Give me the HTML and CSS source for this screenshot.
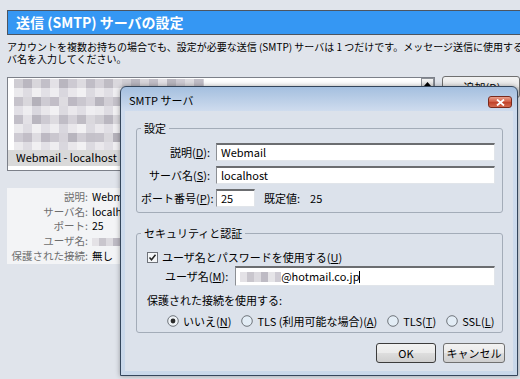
FILE: index.html
```html
<!DOCTYPE html>
<html lang="ja">
<head>
  <meta charset="UTF-8" />
  <meta name="viewport" content="width=device-width, initial-scale=1.0">
  <title>送信 (SMTP) サーバの設定</title>
  <link rel="stylesheet" href="styles.css">
</head>
<body>
<div class="page">
  <div class="header">送信 (SMTP) サーバの設定</div>
  <p class="desc">アカウントを複数お持ちの場合でも、設定が必要な送信 (SMTP) サーバは 1 つだけです。メッセージ送信に使用するサー<br>バ名を入力してください。</p>

  <div class="list-area">
    <div class="list-box">
      <div class="list-items">
        <div class="mosaic-block">
          <div class="mosaic m-a wide"></div>
          <div class="mosaic m-b"></div>
          <div class="mosaic m-c"></div>
          <div class="mosaic m-b shift"></div>
          <div class="mosaic m-a shift"></div>
          <div class="mosaic m-b"></div>
          <div class="mosaic m-c shift"></div>
          <div class="mosaic m-b"></div>
        </div>
        <div class="list-item selected">Webmail - localhost</div>
      </div>
      <div class="scrollbar">
        <div class="scroll-btn">
          <svg width="11" height="11" viewBox="0 0 11 11"><path d="M2 7 L5.5 3 L9 7 Z" fill="#000"/></svg>
        </div>
      </div>
    </div>
    <button class="btn add-btn">追加(<u>D</u>)</button>
  </div>

  <div class="details">
    <span class="dl">説明:</span><span class="dv">Webmail</span>
    <span class="dl">サーバ名:</span><span class="dv">localhost</span>
    <span class="dl">ポート:</span><span class="dv">25</span>
    <span class="dl">ユーザ名:</span><span class="dv"><span class="mosaic-inline small"></span></span>
    <span class="dl">保護された接続:</span><span class="dv">無し</span>
  </div>
</div>

<div class="dialog">
  <div class="dialog-title">
    <span>SMTP サーバ</span>
    <span class="close-btn">
      <svg width="9" height="7" viewBox="0 0 9 7"><path d="M1 0.5 L8 6.5 M8 0.5 L1 6.5" stroke="#fff" stroke-width="1.8"/></svg>
    </span>
  </div>
  <div class="dialog-body">
    <fieldset class="group">
      <legend>設定</legend>
      <div class="form-grid">
        <label>説明(<u>D</u>):</label>
        <div class="field">Webmail</div>
        <label>サーバ名(<u>S</u>):</label>
        <div class="field">localhost</div>
        <label>ポート番号(<u>P</u>):</label>
        <div class="port-row">
          <div class="field port">25</div>
          <span class="default-label">既定値:</span>
          <span>25</span>
        </div>
      </div>
    </fieldset>

    <fieldset class="group security">
      <legend>セキュリティと認証</legend>
      <div class="group-inner">
        <div class="check-row">
          <svg width="11" height="11" viewBox="0 0 11 11">
            <rect x="0.5" y="0.5" width="10" height="10" fill="#f4f6f8" stroke="#6f737a"/>
            <path d="M2.5 5.5 L4.5 7.8 L8.5 2.8" stroke="#222" stroke-width="1.5" fill="none"/>
          </svg>
          <span>ユーザ名とパスワードを使用する(<u>U</u>)</span>
        </div>
        <div class="user-row">
          <label>ユーザ名(<u>M</u>):</label>
          <div class="field user"><span class="mosaic-inline"></span>@hotmail.co.jp<span class="caret"></span></div>
        </div>
        <div class="protect-label">保護された接続を使用する:</div>
        <div class="radio-row">
          <span class="radio">
            <svg width="12" height="12" viewBox="0 0 12 12"><circle cx="6" cy="6" r="5.3" fill="#eef2f6" stroke="#6f747b"/><circle cx="6" cy="6" r="2.4" fill="#2a2a2a"/></svg>
            <span>いいえ(<u>N</u>)</span>
          </span>
          <span class="radio">
            <svg width="12" height="12" viewBox="0 0 12 12"><circle cx="6" cy="6" r="5.3" fill="#e3edf6" stroke="#6f747b"/></svg>
            <span>TLS (利用可能な場合)(<u>A</u>)</span>
          </span>
          <span class="radio">
            <svg width="12" height="12" viewBox="0 0 12 12"><circle cx="6" cy="6" r="5.3" fill="#e3edf6" stroke="#6f747b"/></svg>
            <span>TLS(<u>T</u>)</span>
          </span>
          <span class="radio">
            <svg width="12" height="12" viewBox="0 0 12 12"><circle cx="6" cy="6" r="5.3" fill="#e3edf6" stroke="#6f747b"/></svg>
            <span>SSL(<u>L</u>)</span>
          </span>
        </div>
      </div>
    </fieldset>

    <div class="button-row">
      <button class="btn ok-btn">OK</button>
      <button class="btn cancel-btn">キャンセル</button>
    </div>
  </div>
</div>
</body>
</html>
```

FILE: styles.css
```css
body {
  margin: 0;
  background: #e0e4eb;
  font-family: "Noto Sans CJK JP", "Noto Sans", sans-serif;
  font-size: 11px;
  color: #000;
  overflow: hidden;
  width: 520px;
  height: 379px;
  position: relative;
}
.page {
  padding: 10px 0 0 7px;
}
.header {
  width: 560px;
  height: 25px;
  box-sizing: border-box;
  border: 1px solid #4d5560;
  background: #3597f3;
  color: #fff;
  font-weight: bold;
  font-size: 14px;
  line-height: 22px;
  padding-left: 8px;
}
.desc {
  margin: 6px 0 0;
  font-size: 10px;
  line-height: 12px;
  white-space: nowrap;
}
.list-area {
  display: flex;
  align-items: flex-start;
  gap: 7px;
  margin-top: 12px;
}
.list-box {
  width: 439px;
  height: 94px;
  box-sizing: border-box;
  border: 1px solid #7c8089;
  background: #fff;
  display: flex;
}
.list-items {
  flex: 1;
}
.mosaic-block {
  padding: 1px 0 0 6px;
  height: 72px;
  box-sizing: border-box;
}
.mosaic {
  width: 106px;
  height: 9px;
  background-size: 108px 100%;
  background-repeat: repeat-x;
}
.mosaic.wide { width: 190px; }
.mosaic.shift { background-position: -27px 0; }
.m-a {
  background-image: linear-gradient(90deg, #cfcdd3 0 9px, #bab7c0 9px 18px, #d8d6db 18px 27px, #c2bfc8 27px 36px, #e3e1e6 36px 45px, #b9b6bf 45px 54px, #cdcad2 54px 63px, #dddbe0 63px 72px, #c0bdc6 72px 81px, #d4d1d8 81px 90px, #bfbcc4 90px 99px, #dad8dd 99px 108px);
}
.m-b {
  background-image: linear-gradient(90deg, #ebeaed 0 9px, #dedce2 9px 18px, #f1f0f2 18px 27px, #e2e0e6 27px 36px, #eeedf0 36px 45px, #d9d7de 45px 54px, #e9e7eb 54px 63px, #f2f1f3 63px 72px, #dcdae0 72px 81px, #eae8ec 81px 90px, #e0dee4 90px 99px, #efeef1 99px 108px);
}
.m-c {
  background-image: linear-gradient(90deg, #c6c3cb 0 9px, #d9d7dc 9px 18px, #b4b1ba 18px 27px, #cecbd3 27px 36px, #c2bec7 36px 45px, #dedce1 45px 54px, #bdb9c3 54px 63px, #cac7cf 63px 72px, #d6d3da 72px 81px, #b8b5be 81px 90px, #d1ced5 90px 99px, #c4c1c9 99px 108px);
}
.list-item {
  height: 16px;
  line-height: 15px;
  padding-left: 8px;
  font-size: 11px;
}
.list-item.selected {
  background: #d9d9d9;
}
.scrollbar {
  width: 13px;
  background: #fff;
}
.scroll-btn {
  height: 12px;
  box-sizing: border-box;
  border: 1px solid #8b8f96;
  background: linear-gradient(#f4f4f4, #d6d6d6);
  display: flex;
  align-items: center;
  justify-content: center;
}
.btn {
  height: 20px;
  box-sizing: border-box;
  border: 1px solid #707070;
  border-radius: 3px;
  background: linear-gradient(#f2f2f2 0%, #ebebeb 48%, #dddddd 52%, #cfcfcf 100%);
  font-family: "Noto Sans CJK JP", "Noto Sans", sans-serif;
  font-size: 11px;
  padding: 0;
  line-height: 17px;
  color: #000;
}
.add-btn {
  width: 80px;
  height: 22px;
  margin-top: -1px;
  text-align: left;
  padding-left: 21px;
}
.details {
  margin-top: 17px;
  width: 200px;
  height: 76px;
  box-sizing: border-box;
  background: #f3f4f6;
  padding-top: 1px;
  display: grid;
  grid-template-columns: 81px 1fr;
  column-gap: 4px;
  grid-auto-rows: 14.7px;
  align-items: center;
  font-size: 10.5px;
}
.dl {
  text-align: right;
  color: #6e6e6e;
  white-space: nowrap;
}
.mosaic-inline {
  display: inline-block;
  width: 41px;
  height: 10px;
  vertical-align: middle;
  background-image: linear-gradient(90deg, #e4e2e6 0 7px, #c9c6cd 7px 14px, #dcdadf 14px 21px, #bebbc4 21px 28px, #e6e5e8 28px 35px, #cfccd4 35px 41px);
}
.mosaic-inline.small {
  width: 30px;
  height: 8px;
}

/* dialog */
.dialog {
  position: absolute;
  left: 120px;
  top: 86px;
  width: 398px;
  height: 290px;
  box-sizing: border-box;
  border: 1px solid #34465c;
  border-radius: 6px 6px 0 0;
  background: linear-gradient(#a4bfdf, #cfdcee 24px, #c9d8ea);
  box-shadow: 0 0 5px rgba(0,0,0,0.35);
  display: flex;
  flex-direction: column;
}
.dialog-title {
  height: 23px;
  box-sizing: border-box;
  padding: 6px 5px 0 8px;
  display: flex;
  align-items: flex-start;
  justify-content: space-between;
  line-height: 14px;
}
.close-btn {
  margin-top: 3px;
  width: 24px;
  height: 12px;
  box-sizing: border-box;
  border: 1px solid #7a2a1c;
  border-radius: 3px;
  background: linear-gradient(#e9a28f, #d0583f 50%, #c1432b 55%, #d46a4f);
  display: flex;
  align-items: center;
  justify-content: center;
}
.dialog-body {
  flex: 1;
  margin: 1px 4px 4px;
  background: #dce2eb;
  padding: 10px 10px 0 11px;
}
.group {
  margin: 0;
  padding: 8px 7px 5px 4px;
  border: 1px solid #a3acb8;
  border-radius: 3px;
  min-width: 0;
}
.group legend {
  padding: 0 3px;
  line-height: 14px;
}
.security {
  margin-top: 13px;
  padding: 10px 7px 4px 4px;
}
.form-grid {
  display: grid;
  grid-template-columns: 69px 1fr;
  column-gap: 6px;
  row-gap: 5px;
  align-items: center;
}
.form-grid label {
  text-align: right;
  white-space: nowrap;
}
.field {
  height: 18px;
  box-sizing: border-box;
  border: 1px solid #e1e5ea;
  border-top: 2px solid #6b6d70;
  border-left: 1px solid #8c8f94;
  background: #fff;
  padding-left: 4px;
  line-height: 15px;
  white-space: nowrap;
}
.port-row {
  display: flex;
  align-items: center;
}
.field.port {
  width: 39px;
}
.default-label {
  margin: 0 10px 0 9px;
}
.group-inner {
  padding-left: 6px;
}
.check-row {
  height: 14px;
  display: flex;
  align-items: center;
  gap: 4px;
  margin-bottom: 2px;
}
.user-row {
  display: flex;
  align-items: center;
  gap: 7px;
  margin-left: 18px;
  margin-bottom: 7px;
}
.field.user {
  flex: 1;
  height: 20px;
  line-height: 17px;
  display: flex;
  align-items: center;
}
.caret {
  display: inline-block;
  width: 1px;
  height: 12px;
  background: #000;
}
.protect-label {
  height: 14px;
  line-height: 14px;
  margin-bottom: 7px;
}
.radio-row {
  height: 14px;
  display: flex;
  align-items: center;
  padding-left: 20px;
  gap: 10px;
  white-space: nowrap;
}
.radio {
  display: flex;
  align-items: center;
  gap: 4px;
  flex-shrink: 0;
}
.button-row {
  display: flex;
  justify-content: flex-end;
  gap: 7px;
  margin: 10px -2px 0 0;
}
.ok-btn {
  width: 60px;
  border-color: #3c3c3c;
}
.cancel-btn {
  width: 62px;
}
```
